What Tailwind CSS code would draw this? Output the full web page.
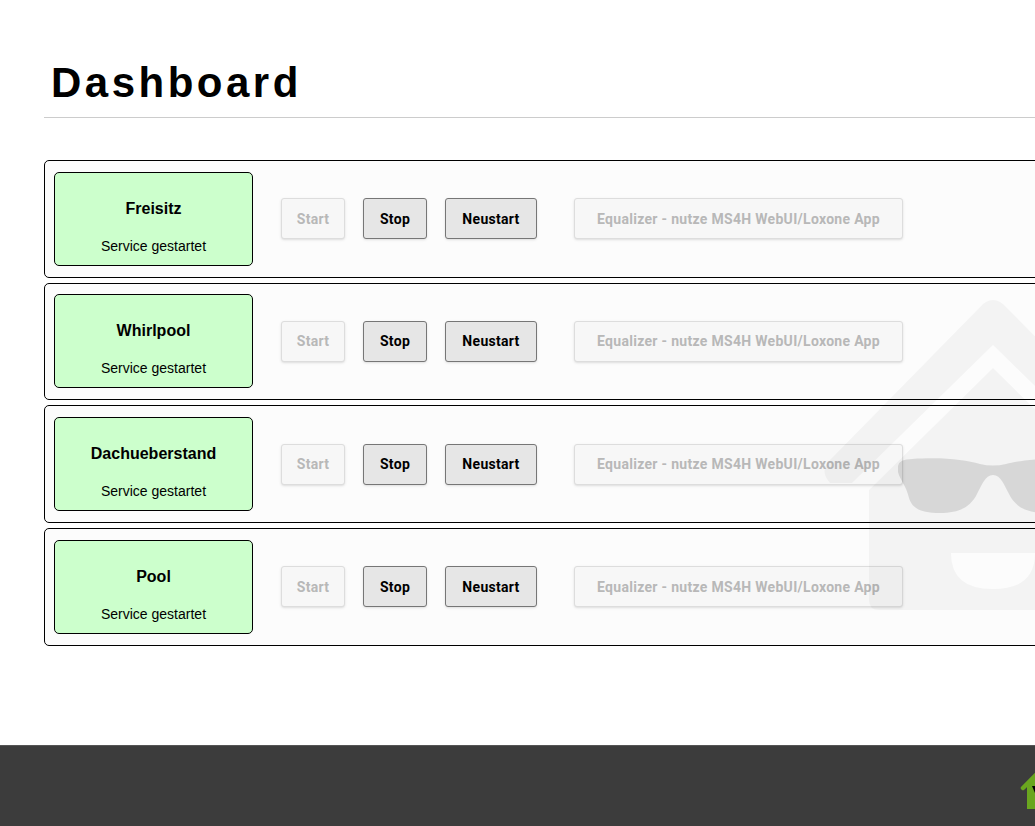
<!DOCTYPE html>
<html lang="de">
<head>
  <meta charset="UTF-8"/>
  <title>Dashboard</title>
  <script src="https://cdn.jsdelivr.net/npm/@tailwindcss/browser@4"></script>
</head>
<body class="relative h-[826px] overflow-hidden bg-white font-['Liberation_Sans',sans-serif] text-black">

<!-- Inhalt -->
<main class="h-[745px] w-[1240px] pl-[44px] pt-[59px]">
  <h1 class="h-[59px] border-b border-[#cccccc] pl-[7px] text-[42px] leading-[48px] font-bold tracking-[3.5px]">Dashboard</h1>

  <div class="mt-[42px] flex flex-col gap-[5px]">

    <section class="flex h-[117.67px] items-center rounded-[5px] border border-black bg-[#fcfcfc] pl-[9px]">
      <div class="flex h-[94px] w-[199px] flex-col items-center rounded-[5px] border border-black bg-[#ccffcc]">
        <h2 class="mt-[26px] text-base leading-[20px] font-bold">Freisitz</h2>
        <p class="mt-[18px] text-sm leading-[18px]">Service gestartet</p>
      </div>
      <div class="ml-[28px] flex items-center font-['Roboto',sans-serif] text-sm font-bold tracking-[0.3px]">
        <button class="h-[41px] w-[64px] rounded-[3px] border border-[#dddddd] bg-[#f7f7f7] text-[#b8b8b8] shadow-sm">Start</button>
        <button class="ml-[18px] h-[41px] w-[64px] rounded-[3px] border border-[#767676] bg-[#e6e6e6] shadow-sm">Stop</button>
        <button class="ml-[18px] h-[41px] w-[92px] rounded-[3px] border border-[#767676] bg-[#e6e6e6] shadow-sm">Neustart</button>
        <button class="ml-[37px] h-[41px] w-[329px] rounded-[3px] border border-[#dddddd] bg-[#f7f7f7] text-[#b8b8b8] shadow-sm">Equalizer - nutze MS4H WebUI/Loxone App</button>
      </div>
    </section>

    <section class="flex h-[117.67px] items-center rounded-[5px] border border-black bg-[#fcfcfc] pl-[9px]">
      <div class="flex h-[94px] w-[199px] flex-col items-center rounded-[5px] border border-black bg-[#ccffcc]">
        <h2 class="mt-[26px] text-base leading-[20px] font-bold">Whirlpool</h2>
        <p class="mt-[18px] text-sm leading-[18px]">Service gestartet</p>
      </div>
      <div class="ml-[28px] flex items-center font-['Roboto',sans-serif] text-sm font-bold tracking-[0.3px]">
        <button class="h-[41px] w-[64px] rounded-[3px] border border-[#dddddd] bg-[#f7f7f7] text-[#b8b8b8] shadow-sm">Start</button>
        <button class="ml-[18px] h-[41px] w-[64px] rounded-[3px] border border-[#767676] bg-[#e6e6e6] shadow-sm">Stop</button>
        <button class="ml-[18px] h-[41px] w-[92px] rounded-[3px] border border-[#767676] bg-[#e6e6e6] shadow-sm">Neustart</button>
        <button class="ml-[37px] h-[41px] w-[329px] rounded-[3px] border border-[#dddddd] bg-[#f7f7f7] text-[#b8b8b8] shadow-sm">Equalizer - nutze MS4H WebUI/Loxone App</button>
      </div>
    </section>

    <section class="flex h-[117.67px] items-center rounded-[5px] border border-black bg-[#fcfcfc] pl-[9px]">
      <div class="flex h-[94px] w-[199px] flex-col items-center rounded-[5px] border border-black bg-[#ccffcc]">
        <h2 class="mt-[26px] text-base leading-[20px] font-bold">Dachueberstand</h2>
        <p class="mt-[18px] text-sm leading-[18px]">Service gestartet</p>
      </div>
      <div class="ml-[28px] flex items-center font-['Roboto',sans-serif] text-sm font-bold tracking-[0.3px]">
        <button class="h-[41px] w-[64px] rounded-[3px] border border-[#dddddd] bg-[#f7f7f7] text-[#b8b8b8] shadow-sm">Start</button>
        <button class="ml-[18px] h-[41px] w-[64px] rounded-[3px] border border-[#767676] bg-[#e6e6e6] shadow-sm">Stop</button>
        <button class="ml-[18px] h-[41px] w-[92px] rounded-[3px] border border-[#767676] bg-[#e6e6e6] shadow-sm">Neustart</button>
        <button class="ml-[37px] h-[41px] w-[329px] rounded-[3px] border border-[#dddddd] bg-[#f7f7f7] text-[#b8b8b8] shadow-sm">Equalizer - nutze MS4H WebUI/Loxone App</button>
      </div>
    </section>

    <section class="flex h-[117.67px] items-center rounded-[5px] border border-black bg-[#fcfcfc] pl-[9px]">
      <div class="flex h-[94px] w-[199px] flex-col items-center rounded-[5px] border border-black bg-[#ccffcc]">
        <h2 class="mt-[26px] text-base leading-[20px] font-bold">Pool</h2>
        <p class="mt-[18px] text-sm leading-[18px]">Service gestartet</p>
      </div>
      <div class="ml-[28px] flex items-center font-['Roboto',sans-serif] text-sm font-bold tracking-[0.3px]">
        <button class="h-[41px] w-[64px] rounded-[3px] border border-[#dddddd] bg-[#f7f7f7] text-[#b8b8b8] shadow-sm">Start</button>
        <button class="ml-[18px] h-[41px] w-[64px] rounded-[3px] border border-[#767676] bg-[#e6e6e6] shadow-sm">Stop</button>
        <button class="ml-[18px] h-[41px] w-[92px] rounded-[3px] border border-[#767676] bg-[#e6e6e6] shadow-sm">Neustart</button>
        <button class="ml-[37px] h-[41px] w-[329px] rounded-[3px] border border-[#dddddd] bg-[#f7f7f7] text-[#b8b8b8] shadow-sm">Equalizer - nutze MS4H WebUI/Loxone App</button>
      </div>
    </section>

  </div>
</main>

<!-- Wasserzeichen -->
<svg class="pointer-events-none absolute top-0 left-0" width="1035" height="826" viewBox="0 0 1035 826">
  <g fill="#000000" fill-opacity="0.035">
    <path d="M983 304 Q993 296 1003 304 L1160 462 Q1168 474 1158 483 L1134 483 L993 345 L852 483 L830 483 Q820 472 828 462 Z"/>
    <path fill-rule="evenodd" d="M993 368 L1117 490 L1117 600 Q1117 610 1107 610 L879 610 Q869 610 869 600 L869 490 Z M951 553 L1035 553 Q1035 589 993 589 Q951 589 951 553 Z"/>
  </g>
  <path fill="#000000" fill-opacity="0.115" d="M898 466 Q899 459 912 459 C945 457 965 460 980 464 Q993 467 1006 464 C1021 460 1050 457 1088 459 L1088 513 L940 513 C920 513 912 508 909 498 C906 485 900 480 898 472 Z M993 475 C985 475 982 485 977 494 C970 508 958 513 940 513 L1046 513 C1028 513 1016 508 1009 494 C1004 485 1001 475 993 475 Z" fill-rule="evenodd"/>
</svg>

<!-- Fußzeile -->
<footer class="absolute right-0 bottom-0 left-0 h-[81px] overflow-hidden border-t border-[#555555] bg-[#3c3c3c]">
  <svg class="absolute top-0 left-0" width="1035" height="81" viewBox="0 745 1035 81">
    <path d="M1027 785 L1035 777 L1035 808 L1027 808 Z" fill="#6aa61f"/>
    <path d="M1023 787 L1037 773" stroke="#6aa61f" stroke-width="4.5" stroke-linecap="round" fill="none"/>
    <path d="M1032 785 L1035 785 L1035 792 Z" fill="#000000"/>
  </svg>
</footer>
</body>
</html>
